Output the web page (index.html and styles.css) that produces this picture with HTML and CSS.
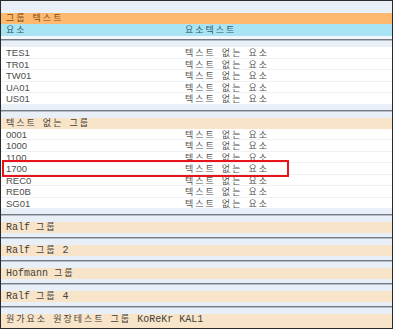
FILE: index.html
```html
<!DOCTYPE html>
<html lang="ko">
<head>
<meta charset="utf-8">
<title>그룹 텍스트</title>
<link rel="stylesheet" href="styles.css">
</head>
<body>
<div class="frame">
  <div class="top-pad"></div>
  <div class="hdr-group"><span class="ko">그룹 텍스트</span></div>
  <div class="hdr-cols"><span class="c1 ko">요소</span><span class="c2 ko">요소텍스트</span></div>
  <div class="hdr-gap"></div>

  <section class="grp">
    <div class="rows">
      <div class="row"><span class="c1">TES1</span><span class="c2 ko">텍스트 없는 요소</span></div>
      <div class="row"><span class="c1">TR01</span><span class="c2 ko">텍스트 없는 요소</span></div>
      <div class="row"><span class="c1">TW01</span><span class="c2 ko">텍스트 없는 요소</span></div>
      <div class="row"><span class="c1">UA01</span><span class="c2 ko">텍스트 없는 요소</span></div>
      <div class="row"><span class="c1">US01</span><span class="c2 ko">텍스트 없는 요소</span></div>
    </div>
  </section>

  <section class="grp">
    <div class="ghead"><span class="ko">텍스트 없는 그룹</span></div>
    <div class="rows">
      <div class="row"><span class="c1">0001</span><span class="c2 ko">텍스트 없는 요소</span></div>
      <div class="row"><span class="c1">1000</span><span class="c2 ko">텍스트 없는 요소</span></div>
      <div class="row"><span class="c1">1100</span><span class="c2 ko">텍스트 없는 요소</span></div>
      <div class="row"><span class="c1">1700</span><span class="c2 ko">텍스트 없는 요소</span></div>
      <div class="row"><span class="c1">REC0</span><span class="c2 ko">텍스트 없는 요소</span></div>
      <div class="row"><span class="c1">RE0B</span><span class="c2 ko">텍스트 없는 요소</span></div>
      <div class="row"><span class="c1">SG01</span><span class="c2 ko">텍스트 없는 요소</span></div>
    </div>
  </section>

  <section class="grp">
    <div class="ghead">Ralf <span class="ko">그룹</span></div>
  </section>
  <section class="grp">
    <div class="ghead">Ralf <span class="ko">그룹</span> 2</div>
  </section>
  <section class="grp">
    <div class="ghead">Hofmann <span class="ko">그룹</span></div>
  </section>
  <section class="grp">
    <div class="ghead">Ralf <span class="ko">그룹</span> 4</div>
  </section>
  <section class="grp last">
    <div class="ghead"><span class="ko">원가요소 원장테스트 그룹</span> KoReKr KAL1</div>
  </section>

  <div class="mark"></div>
</div>
</body>
</html>
```

FILE: styles.css
```css
html, body {
  margin: 0;
  padding: 0;
  background: #ffffff;
}

.frame {
  position: relative;
  width: 393px;
  height: 329px;
  box-sizing: border-box;
  border: 1px solid #2b2b2b;
  background: #e9eff7;
  overflow: hidden;
  font-family: "Liberation Mono", "Noto Sans CJK KR", monospace;
  font-size: 10px;
  line-height: 10px;
  color: #45403a;
  white-space: nowrap;
}

.ko {
  font-family: "Noto Sans CJK KR", sans-serif;
  font-size: 9px;
  letter-spacing: 2px;
  word-spacing: 1.5px;
}

.top-pad {
  height: 12px;
}

.hdr-group {
  height: 11px;
  padding-left: 5px;
  background: #ffb96e;
  color: #7d4a12;
}

.hdr-cols {
  display: flex;
  height: 11.5px;
  box-sizing: border-box;
  padding: 1px 0 0 5px;
  background: #a8e4f3;
  color: #2b5f70;
}

.c1 {
  width: 179px;
  flex: none;
}

.hdr-gap {
  height: 3.5px;
  background: #f3f6fa;
}

.grp {
  border-top: 1px solid #737b84;
  box-shadow: inset 0 1px 0 #b4bcc5;
  padding: 7px 0 4px;
}

.grp .rows {
  margin-bottom: 1px;
}

.ghead {
  height: 11px;
  padding-left: 5px;
  background: #f8e4c8;
  color: #45403a;
}

.grp.last .ghead {
  height: 18px;
}

.row {
  display: flex;
  align-items: baseline;
  height: 11.5px;
  box-sizing: border-box;
  padding: 1.4px 0 0 5px;
  background: #ffffff;
  border-bottom: 1px solid #edf1f6;
  line-height: 10px;
}

.row .c1 {
  font-family: "Liberation Sans", Arial, sans-serif;
  font-size: 9.5px;
  color: #4d4d4d;
}

.row .c2 {
  color: #555555;
}

.mark {
  position: absolute;
  left: 1px;
  top: 159px;
  width: 287px;
  height: 17px;
  box-sizing: border-box;
  border: 2px solid #e8141a;
}
```
